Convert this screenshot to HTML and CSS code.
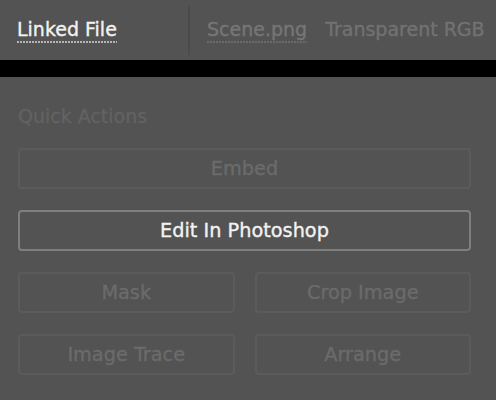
FILE: index.html
```html
<!DOCTYPE html>
<html>
<head>
<meta charset="utf-8">
<link rel="stylesheet" href="styles.css">
</head>
<body>
<header class="topbar">
  <div class="tab tab-main"><span class="label label-active">Linked File</span></div>
  <div class="divider"></div>
  <div class="tab tab-info">
    <span class="label label-dim">Scene.png</span>
    <span class="meta">Transparent RGB</span>
  </div>
</header>
<div class="band"></div>
<section class="panel">
  <h2 class="heading">Quick Actions</h2>
  <div class="actions">
    <button class="btn btn-disabled full">Embed</button>
    <button class="btn btn-active full">Edit In Photoshop</button>
    <button class="btn btn-disabled">Mask</button>
    <button class="btn btn-disabled">Crop Image</button>
    <button class="btn btn-disabled">Image Trace</button>
    <button class="btn btn-disabled">Arrange</button>
  </div>
</section>
</body>
</html>
```

FILE: styles.css
```css
html, body {
  margin: 0;
  padding: 0;
  background: #535353;
  font-family: "DejaVu Sans", "Liberation Sans", sans-serif;
  font-size: 19px;
  line-height: 22px;
  -webkit-text-stroke: 0.35px currentColor;
}

.topbar {
  display: flex;
  height: 60px;
  align-items: flex-start;
}

.tab-main {
  flex: 0 0 171px;
  padding: 18px 0 0 17px;
}

.divider {
  flex: 0 0 2px;
  height: 49px;
  margin-top: 6px;
  background: #4b4b4b;
}

.tab-info {
  display: flex;
  gap: 18px;
  padding: 18px 0 0 17px;
  white-space: nowrap;
}

.label {
  display: inline-block;
  padding-bottom: 3px;
  background-repeat: repeat-x;
  background-position: 0 100%;
  background-size: 3px 2px;
}

.label-active {
  color: #f2f2f2;
  background-image: linear-gradient(to right, #b5b5b5 2px, transparent 2px);
}

.label-dim {
  color: #767676;
  background-image: linear-gradient(to right, #6a6a6a 2px, transparent 2px);
}

.meta {
  color: #727272;
}

.band {
  height: 17px;
  background: #000;
}

.panel {
  padding: 28px 25px 0 18px;
}

.heading {
  margin: 0 0 21px;
  font-size: 19px;
  font-weight: normal;
  line-height: 22px;
  color: #626262;
}

.actions {
  display: grid;
  grid-template-columns: 1fr 1fr;
  column-gap: 20px;
  row-gap: 21px;
}

.btn {
  height: 41px;
  box-sizing: border-box;
  margin: 0;
  padding: 0;
  background: transparent;
  border-radius: 4px;
  font-family: inherit;
  font-size: 19.3px;
  line-height: 22px;
  -webkit-text-stroke: 0.35px currentColor;
}

.full {
  grid-column: 1 / span 2;
}

.btn-disabled {
  border: 2px solid #5b5b5b;
  color: #6b6b6b;
}

.btn-active {
  border: 2px solid #7f7f7f;
  color: #f2f2f2;
}
```
